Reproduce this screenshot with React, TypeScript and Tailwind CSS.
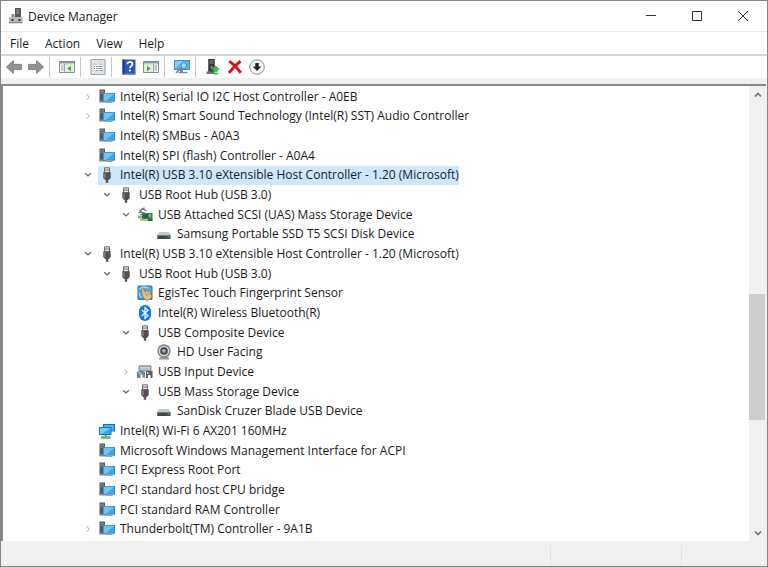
import { useState, type ReactNode } from 'react';

type IconName =
  | 'system'
  | 'usb'
  | 'scsi'
  | 'disk'
  | 'finger'
  | 'bluetooth'
  | 'camera'
  | 'input'
  | 'network';

interface Device {
  id: string;
  label: string;
  icon: IconName;
  depth: number;
  state?: 'open' | 'closed';
}

const DEVICES: Device[] = [
  { id: 'i2c', label: 'Intel(R) Serial IO I2C Host Controller - A0EB', icon: 'system', depth: 0, state: 'closed' },
  { id: 'sst', label: 'Intel(R) Smart Sound Technology (Intel(R) SST) Audio Controller', icon: 'system', depth: 0, state: 'closed' },
  { id: 'smbus', label: 'Intel(R) SMBus - A0A3', icon: 'system', depth: 0 },
  { id: 'spi', label: 'Intel(R) SPI (flash) Controller - A0A4', icon: 'system', depth: 0 },
  { id: 'host1', label: 'Intel(R) USB 3.10 eXtensible Host Controller - 1.20 (Microsoft)', icon: 'usb', depth: 0, state: 'open' },
  { id: 'hub1', label: 'USB Root Hub (USB 3.0)', icon: 'usb', depth: 1, state: 'open' },
  { id: 'uas', label: 'USB Attached SCSI (UAS) Mass Storage Device', icon: 'scsi', depth: 2, state: 'open' },
  { id: 't5', label: 'Samsung Portable SSD T5 SCSI Disk Device', icon: 'disk', depth: 3 },
  { id: 'host2', label: 'Intel(R) USB 3.10 eXtensible Host Controller - 1.20 (Microsoft)', icon: 'usb', depth: 0, state: 'open' },
  { id: 'hub2', label: 'USB Root Hub (USB 3.0)', icon: 'usb', depth: 1, state: 'open' },
  { id: 'egis', label: 'EgisTec Touch Fingerprint Sensor', icon: 'finger', depth: 2 },
  { id: 'bt', label: 'Intel(R) Wireless Bluetooth(R)', icon: 'bluetooth', depth: 2 },
  { id: 'composite', label: 'USB Composite Device', icon: 'usb', depth: 2, state: 'open' },
  { id: 'cam', label: 'HD User Facing', icon: 'camera', depth: 3 },
  { id: 'hid', label: 'USB Input Device', icon: 'input', depth: 2, state: 'closed' },
  { id: 'mass', label: 'USB Mass Storage Device', icon: 'usb', depth: 2, state: 'open' },
  { id: 'cruzer', label: 'SanDisk Cruzer Blade USB Device', icon: 'disk', depth: 3 },
  { id: 'wifi', label: 'Intel(R) Wi-Fi 6 AX201 160MHz', icon: 'network', depth: 0 },
  { id: 'acpi', label: 'Microsoft Windows Management Interface for ACPI', icon: 'system', depth: 0 },
  { id: 'pcie', label: 'PCI Express Root Port', icon: 'system', depth: 0 },
  { id: 'bridge', label: 'PCI standard host CPU bridge', icon: 'system', depth: 0 },
  { id: 'ram', label: 'PCI standard RAM Controller', icon: 'system', depth: 0 },
  { id: 'tb', label: 'Thunderbolt(TM) Controller - 9A1B', icon: 'system', depth: 0, state: 'closed' },
];

const INDENT = ['pl-[77px]', 'pl-[96px]', 'pl-[115px]', 'pl-[134px]'];

function Svg({ children }: { children: ReactNode }) {
  return (
    <svg viewBox="0 0 16 16" className="h-4 w-4 shrink-0" aria-hidden="true">
      {children}
    </svg>
  );
}

const ICONS: Record<IconName, ReactNode> = {
  system: (
    <Svg>
      <path d="M0.5 0.5H6V13H0.5z" fill="#535b62" />
      <path d="M1.2 2.2h4M1.2 4.2h4" stroke="#98a2a9" strokeWidth="0.8" />
      <path d="M0.5 11.5H7v2H0.5z" fill="#808b93" />
      <path d="M4 4h12v8.7H4z" fill="#3c84b4" />
      <path d="M4.8 4.8h10.4v7.1H4.8z" fill="#3ba7e8" />
      <path d="M4.8 4.8h10.4L7 11.9H4.8z" fill="#6fc4f6" />
      <path d="M7 12.9h6.5V14H7z" fill="#8fa3b3" />
    </Svg>
  ),
  usb: (
    <Svg>
      <path d="M5.5 0.8h5V6h-5z" fill="#e4e4e4" stroke="#6d6d6d" />
      <path d="M7 2.4v1.4M9 2.4v1.4" stroke="#444" />
      <path d="M4.3 5.3h7.4V11l-1.9 2H6.2l-1.9-2z" fill="#515151" />
      <path d="M5.3 6.2h1.2v5H5.3z" fill="#8b8b8b" />
      <path d="M6.8 13h2.4v2.8H6.8z" fill="#555" />
    </Svg>
  ),
  scsi: (
    <Svg>
      <path d="M7.5 0.8 2.8 4l4.7 3" fill="none" stroke="#6b7176" strokeWidth="1.3" />
      <path d="M1.5 5.5h6M5 1.5l4.5 2.2M3 8l5-1.5" stroke="#70777c" strokeWidth="1.2" />
      <path d="M1 8.5h5v3H1z" fill="#9da4a8" />
      <path d="M5 6h10.5v7.5H5z" fill="#2d8659" />
      <path d="M6.5 7.5h4v3.3h-4z" fill="#1d5673" />
      <path d="M12 7h2v3h-2z" fill="#86c36b" />
      <path d="M3 12h8v1.8H3z" fill="#d9bd38" />
      <path d="M11 12.5h4.5v1.5H11z" fill="#275e4b" />
    </Svg>
  ),
  disk: (
    <Svg>
      <path d="M3 6h10l1.5 3H1.3z" fill="#c4c9cb" />
      <path d="M1.3 9h13.2v4H1.3z" fill="#41474a" />
      <path d="M2 9.5h11.8" stroke="#788084" />
      <path d="M11.5 11h1.7" stroke="#54c57f" />
    </Svg>
  ),
  finger: (
    <Svg>
      <rect x="0.5" y="0.5" width="15" height="14.5" rx="1.5" fill="#247bc0" />
      <rect x="1.5" y="1.5" width="13" height="12" rx="1" fill="#55a6dc" />
      <path d="M4 3c1-1 2 0 2.5 1.2L8 7l2-1.5 3 1 2 5.5-3 3H8L5.5 11z" fill="#e2bf82" stroke="#976a36" strokeWidth="0.7" />
      <path d="M2.2 4.5Q6 0 11 3.2" fill="none" stroke="#d1effb" />
      <path d="M2.8 8q-1 2.5 1.5 4.5" fill="none" stroke="#c7e8f7" />
      <path d="m8 8 2 3m.5-4 1.5 3" stroke="#a9783c" strokeWidth="0.7" />
    </Svg>
  ),
  bluetooth: (
    <Svg>
      <rect x="2" y="0" width="12" height="16" rx="6" fill="#087be5" />
      <path d="m4.8 5 6.2 5.8L8 13.5v-11L11 5.2 4.8 11" fill="none" stroke="#fff" strokeWidth="1.2" />
    </Svg>
  ),
  camera: (
    <Svg>
      <path d="M4 13.2 2.5 15.5h11L12 13z" fill="#8e9699" />
      <circle cx="8" cy="7" r="6.7" fill="#7b8387" />
      <circle cx="8" cy="7" r="5.3" fill="#d3d7d9" />
      <circle cx="8" cy="7" r="3.8" fill="#42494e" />
      <circle cx="8" cy="7" r="2" fill="#8b979e" />
      <circle cx="7.3" cy="6.2" r="0.8" fill="#eef6fa" />
    </Svg>
  ),
  input: (
    <Svg>
      <path d="M2 1.8h12v5H2z" fill="#adb5ba" stroke="#737b80" strokeWidth="0.8" />
      <path d="M3.5 3.5h9M3.5 5h9" stroke="#e4e8ea" strokeDasharray="1.2 0.8" />
      <path d="M0 8q4-3 8 0v5.5H5.5v-3h-2V14H0z" fill="#6d8798" />
      <path d="M9 7h6.5v7h-2v-3H11v3H9z" fill="#53606a" />
      <path d="M10 8h1.5v2H10z" fill="#bdd2df" />
      <circle cx="2.8" cy="9.3" r="1" fill="#b9d7e8" />
    </Svg>
  ),
  network: (
    <Svg>
      <path d="M4 1h12v7.5H4z" fill="#1472b4" />
      <path d="M5 2h10v5.5H5z" fill="#4bb4f1" />
      <path d="M0 4h12.5v8H0z" fill="#1578bc" />
      <path d="M1 5h10.5v6H1z" fill="#39a9ef" />
      <path d="M1 5h10.5L2.5 11H1z" fill="#78ccf9" />
      <path d="M5.5 12h2v1.2h-2z" fill="#4b8c62" />
      <path d="M2 13.2h9l1 1.3-1 1.2H2z" fill="#50b961" />
    </Svg>
  ),
};

const panel = (
  <>
    <path d="M0.5 2.5h15v11h-15z" fill="#f7f8f9" stroke="#858e98" />
    <path d="M1 3h14v1.5H1z" fill="#8796a6" />
    <path d="M1 5h14" stroke="#c5ccd2" />
  </>
);

const TOOLBAR: { label: string; icon: ReactNode }[][] = [
  [
    {
      label: 'Back',
      icon: <path d="M0.4 8 7.4 1.6v3.8h8.2v5.2H7.4v3.8z" fill="#939393" stroke="#707070" strokeWidth="0.8" />,
    },
    {
      label: 'Forward',
      icon: <path d="M15.6 8 8.6 1.6v3.8H0.4v5.2h8.2v3.8z" fill="#939393" stroke="#707070" strokeWidth="0.8" />,
    },
  ],
  [
    {
      label: 'Show/Hide Console Tree',
      icon: (
        <>
          {panel}
          <path d="M5.5 5v8.5" stroke="#98a2aa" />
          <path d="M2 7h2.5M2 9h2.5M2 11h2.5" stroke="#8f9aa5" />
          <path d="M6.5 6h8v7h-8z" fill="#e2efdd" />
          <path d="M12 6.8v5.4L8.3 9.5z" fill="#45a62e" />
        </>
      ),
    },
  ],
  [
    {
      label: 'Properties',
      icon: (
        <>
          <path d="M1 0.7h14v14.6H1z" fill="#f5f6f7" stroke="#8d9297" />
          <path d="M3 3h10v10H3z" fill="#fff" stroke="#b2b9bf" strokeWidth="0.7" />
          <path d="M4 5h3M8 5h4M6 7.5h6M6 9.5h6" stroke="#8198aa" strokeWidth="0.9" />
          <path d="M4 7.5h1M4 9.5h1" stroke="#5683a7" />
          <path d="M5.5 11.5h3M9.5 11.5h3" stroke="#8f969b" />
        </>
      ),
    },
  ],
  [
    {
      label: 'Help',
      icon: (
        <>
          <path d="M1.5 0.5h13v15h-13z" fill="#3155bd" />
          <path d="M1.5 0.5h2v15h-2z" fill="#213b8c" />
          <path d="M3.5 14h11v1.5h-11z" fill="#5272cb" />
          <path d="M6.3 5.3C6.3 2.2 11.5 2.3 11.5 5c0 2-2.6 2-2.6 4.2" fill="none" stroke="#fff" strokeWidth="1.7" />
          <circle cx="8.9" cy="11.5" r="1.1" fill="#fff" />
        </>
      ),
    },
    {
      label: 'Show/Hide Action Pane',
      icon: (
        <>
          {panel}
          <path d="M1 6h8.5v7H1z" fill="#e2efdd" />
          <path d="M4 6.8v5.4l3.7-2.7z" fill="#45a62e" />
          <path d="M10.5 5v8.5" stroke="#98a2aa" />
          <path d="M11.5 7H14M11.5 9H14M11.5 11H14" stroke="#8f9aa5" />
        </>
      ),
    },
  ],
  [
    {
      label: 'Scan for hardware changes',
      icon: (
        <>
          <path d="M0 1h16v10H0z" fill="#3f93c4" />
          <path d="M1 2h14v8H1z" fill="#56b5e6" />
          <path d="M1 2h9l-9 7z" fill="#84cff3" />
          <path d="M6 11h3v2H6zM4.5 13h9v1.2h-9z" fill="#778d9b" />
          <circle cx="9.8" cy="6.5" r="2.9" fill="#9ddaf5" stroke="#4085ad" />
          <path d="m7.5 8.8-5.5 5" stroke="#6f8594" strokeWidth="1.6" />
        </>
      ),
    },
  ],
  [
    {
      label: 'Update driver',
      icon: (
        <>
          <path d="M3.2 0h6.6v13H3.2z" fill="#363b3e" />
          <path d="M4.5 2h4M4.5 4h4" stroke="#81888d" />
          <circle cx="6.5" cy="8.3" r="1" fill="#9ea5aa" />
          <path d="M1.5 12.5h8V15h-8z" fill="#6d7376" />
          <path d="m10.5 6.5 4.7 4.3h-2.4v2H8.4v-2H6z" fill="#41b849" />
          <path d="M8.4 13.6h4.4v1.9H8.4z" fill="#41b849" />
        </>
      ),
    },
    {
      label: 'Uninstall device',
      icon: <path d="M2.2 2.2Q8.2 6 13.8 13.8M13.5 2.2Q7 7 2 13.8" fill="none" stroke="#d3161e" strokeWidth="3" />,
    },
    {
      label: 'Disable device',
      icon: (
        <>
          <circle cx="8" cy="8" r="7.3" fill="#fafafa" stroke="#8d8d8d" />
          <path d="M6.3 4h3.4v3.5h2.6L8 12 3.7 7.5h2.6z" fill="#202020" />
        </>
      ),
    },
  ],
];

function Chevron({ open }: { open: boolean }) {
  return (
    <svg viewBox="0 0 8 8" className="h-2 w-2" fill="none" aria-hidden="true">
      {open ? (
        <path d="m1.2 2.2 2.8 2.7 2.8-2.7" stroke="#606060" strokeWidth="1.2" />
      ) : (
        <path d="M2.6 1.2 5.3 4 2.6 6.8" stroke="#a6a6a6" />
      )}
    </svg>
  );
}

function TitleBar() {
  return (
    <header className="flex h-[31px] shrink-0 items-center border-b border-[#ececec] bg-white pr-px">
      <svg viewBox="0 0 16 16" className="ml-[7px] h-4 w-4" aria-hidden="true">
        <path d="M7 0h6v9H7z" fill="#54585b" />
        <path d="M8.5 1h2.5v5H8.5z" fill="#7c8387" />
        <path d="M3.5 6h3v3h-3z" fill="#888" />
        <path d="M1 9h13.5v6H1z" fill="#b9bcbe" />
        <path d="M1 14h13.5v1.3H1z" fill="#868a8c" />
        <path d="M3.5 11h2v2h-2zM10.5 11h2v2h-2z" fill="#333" />
      </svg>
      <h1 className="ml-1 flex-1 pt-px">Device Manager</h1>
      <button type="button" aria-label="Minimize" className="flex h-full w-[46px] items-center justify-center">
        <svg viewBox="0 0 10 10" className="h-[10px] w-[10px]">
          <path d="M0 4.5h10" stroke="#333" />
        </svg>
      </button>
      <button type="button" aria-label="Maximize" className="flex h-full w-[46px] items-center justify-center">
        <svg viewBox="0 0 10 10" className="h-[10px] w-[10px]">
          <path d="M0.5 0.5h9v9h-9z" fill="none" stroke="#333" />
        </svg>
      </button>
      <button type="button" aria-label="Close" className="flex h-full w-[46px] items-center justify-center">
        <svg viewBox="0 0 10 10" className="h-[10px] w-[10px]">
          <path d="m0 0 10 10M10 0 0 10" stroke="#333" />
        </svg>
      </button>
    </header>
  );
}

function Toolbar() {
  return (
    <div role="toolbar" aria-label="Actions" className="flex h-[22px] shrink-0 items-center bg-white pl-[2px]">
      {TOOLBAR.map((group, i) => (
        <div key={i} className="flex items-center">
          {i > 0 && (
            <span className="w-[9px] pl-[2px]">
              <span className="block h-[20px] w-px bg-[#c9c9c9]" />
            </span>
          )}
          {group.map((tool) => (
            <button key={tool.label} type="button" aria-label={tool.label} className="flex w-[22px] justify-center">
              <Svg>{tool.icon}</Svg>
            </button>
          ))}
        </div>
      ))}
    </div>
  );
}

function ScrollBar() {
  return (
    <div className="flex w-[17px] shrink-0 flex-col bg-[#f0f0f0]">
      <button type="button" aria-label="Scroll up" className="flex h-[17px] items-center justify-center">
        <svg viewBox="0 0 8 8" className="h-2 w-2">
          <path d="M1 5.5 4 2.5l3 3" fill="none" stroke="#707070" strokeWidth="1.6" />
        </svg>
      </button>
      <div className="grow-[191]" />
      <div className="mr-px grow-[126] bg-[#cdcdcd]" />
      <div className="grow-[104]" />
      <button type="button" aria-label="Scroll down" className="flex h-[17px] items-center justify-center">
        <svg viewBox="0 0 8 8" className="h-2 w-2">
          <path d="m1 2.5 3 3 3-3" fill="none" stroke="#707070" strokeWidth="1.6" />
        </svg>
      </button>
    </div>
  );
}

export default function App() {
  const [selected, setSelected] = useState('host1');
  const [open, setOpen] = useState(() => new Set(DEVICES.filter((d) => d.state === 'open').map((d) => d.id)));

  const toggle = (id: string) => {
    const next = new Set(open);
    if (!next.delete(id)) next.add(id);
    setOpen(next);
  };

  // Drop every row that sits below a collapsed parent
  const rows: Device[] = [];
  let hiddenBelow = Infinity;
  for (const d of DEVICES) {
    if (d.depth > hiddenBelow) continue;
    hiddenBelow = d.state && !open.has(d.id) ? d.depth : Infinity;
    rows.push(d);
  }

  return (
    <div className="flex h-screen flex-col border border-[#858585] bg-[#f0f0f0] font-['Open_Sans','Noto_Sans',sans-serif] text-[12px] text-[#1a1a1a]">
      <TitleBar />
      <nav className="flex h-[24px] shrink-0 items-center gap-4 border-b-2 border-[#d4d4d4] bg-white pt-[2px] pl-[9px]">
        {['File', 'Action', 'View', 'Help'].map((m) => (
          <button key={m} type="button">
            {m}
          </button>
        ))}
      </nav>
      <Toolbar />
      <main className="mt-[6px] mr-px flex min-h-0 flex-1 border-t-2 border-l-2 border-[#8a8a8a] bg-white">
        <ul role="tree" aria-label="Devices" className="flex min-w-0 flex-1 flex-col overflow-hidden pt-px pb-[2px]">
          {rows.map((d) => (
            <li
              key={d.id}
              role="treeitem"
              aria-level={d.depth + 1}
              aria-selected={selected === d.id}
              aria-expanded={d.state ? open.has(d.id) : undefined}
              className={`flex max-h-5 min-h-0 flex-1 items-stretch gap-[2px] ${INDENT[d.depth]}`}
            >
              {d.state ? (
                <button
                  type="button"
                  aria-label={`Toggle ${d.label}`}
                  onClick={() => toggle(d.id)}
                  className="flex w-4 shrink-0 items-center justify-center"
                >
                  <Chevron open={open.has(d.id)} />
                </button>
              ) : (
                <span className="w-4 shrink-0" />
              )}
              <button
                type="button"
                onClick={() => setSelected(d.id)}
                className={`flex items-center gap-[5px] pl-px leading-4 whitespace-nowrap ${
                  selected === d.id ? 'bg-[#cce8ff]' : ''
                }`}
              >
                {ICONS[d.icon]}
                <span>{d.label}</span>
              </button>
            </li>
          ))}
        </ul>
        <ScrollBar />
      </main>
      <footer className="flex h-[25px] shrink-0 pt-1">
        <div className="flex-1" />
        <div className="w-[131px] border-l border-[#e2e2e2]" />
        <div className="w-[86px] border-l border-[#e2e2e2]" />
      </footer>
    </div>
  );
}
